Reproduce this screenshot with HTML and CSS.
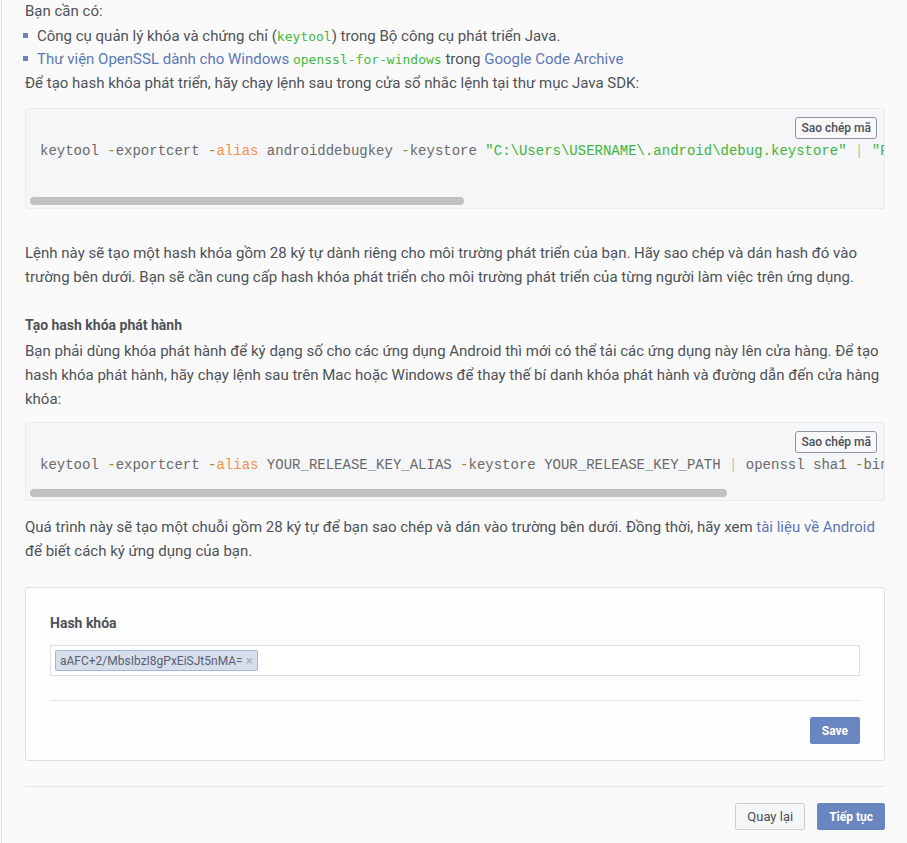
FILE: index.html
```html
<!DOCTYPE html>
<html lang="vi">
<head>
<meta charset="utf-8">
<title>Hash khóa</title>
<link rel="stylesheet" href="styles.css">
</head>
<body>
<div class="page">
  <p class="intro">Bạn cần có:</p>
  <ul class="reqs">
    <li>Công cụ quản lý khóa và chứng chỉ (<code class="inline">keytool</code>) trong Bộ công cụ phát triển Java.</li>
    <li><a href="#">Thư viện OpenSSL dành cho Windows</a> <code class="inline">openssl-for-windows</code> trong <a href="#">Google Code Archive</a></li>
  </ul>
  <p class="lead">Để tạo hash khóa phát triển, hãy chạy lệnh sau trong cửa sổ nhắc lệnh tại thư mục Java SDK:</p>

  <div class="codebox first">
    <pre class="code"><span class="t">keytool</span> <span class="op">-</span>exportcert <span class="op">-</span><span class="kw">alias</span> androiddebugkey <span class="op">-</span>keystore <span class="str">"C:\Users\USERNAME\.android\debug.keystore"</span> <span class="pipe">|</span> <span class="str">"PATH_TO_OPENSSL_LIBRARY\bin\openssl"</span> sha1 <span class="op">-</span>binary <span class="pipe">|</span> <span class="str">"PATH_TO_OPENSSL_LIBRARY\bin\openssl"</span> base64</pre>
    <div class="hscroll"><div class="thumb" style="width: 51%"></div></div>
    <button class="copy">Sao chép mã</button>
  </div>

  <p class="para gap-lg">Lệnh này sẽ tạo một hash khóa gồm 28 ký tự dành riêng cho môi trường phát triển của bạn. Hãy sao chép và dán hash đó vào trường bên dưới. Bạn sẽ cần cung cấp hash khóa phát triển cho môi trường phát triển của từng người làm việc trên ứng dụng.</p>

  <h4 class="subhead">Tạo hash khóa phát hành</h4>
  <p class="para">Bạn phải dùng khóa phát hành để ký dạng số cho các ứng dụng Android thì mới có thể tải các ứng dụng này lên cửa hàng. Để tạo hash khóa phát hành, hãy chạy lệnh sau trên Mac hoặc Windows để thay thế bí danh khóa phát hành và đường dẫn đến cửa hàng khóa:</p>

  <div class="codebox second">
    <pre class="code"><span class="t">keytool</span> <span class="op">-</span>exportcert <span class="op">-</span><span class="kw">alias</span> YOUR_RELEASE_KEY_ALIAS <span class="op">-</span>keystore YOUR_RELEASE_KEY_PATH <span class="pipe">|</span> openssl sha1 <span class="op">-</span>binary <span class="pipe">|</span> openssl base64</pre>
    <div class="hscroll"><div class="thumb" style="width: 82%"></div></div>
    <button class="copy">Sao chép mã</button>
  </div>

  <p class="para gap-sm">Quá trình này sẽ tạo một chuỗi gồm 28 ký tự để bạn sao chép và dán vào trường bên dưới. Đồng thời, hãy xem <a href="#">tài liệu về Android</a> để biết cách ký ứng dụng của bạn.</p>

  <div class="card">
    <div class="label">Hash khóa</div>
    <div class="tokens">
      <span class="token">aAFC+2/MbsIbzI8gPxEiSJt5nMA= <span class="x">×</span></span>
    </div>
    <div class="card-foot">
      <button class="btn primary">Save</button>
    </div>
  </div>

  <div class="footer">
    <button class="btn secondary">Quay lại</button>
    <button class="btn primary">Tiếp tục</button>
  </div>
</div>
</body>
</html>
```
FILE: styles.css
```css
html, body {
  margin: 0;
  padding: 0;
  background: #fafafa;
}
body {
  font-family: Roboto, "Noto Sans", Arial, sans-serif;
  font-size: 15px;
  color: #4e5259;
}
.page {
  margin-left: 1px;
  border-left: 1px solid #e3e3e3;
  padding: 0 22px 12px 23px;
  min-height: 831px;
}
p { margin: 0; }
a { color: #5b77b5; text-decoration: none; }

.intro { line-height: 23px; }
.reqs {
  list-style: none;
  margin: 2px 0 0;
  padding: 0 0 0 12px;
  line-height: 23px;
}
.reqs li::before {
  content: "";
  display: inline-block;
  width: 5px;
  height: 5px;
  background: #6d84b4;
  margin-left: -14px;
  margin-right: 9px;
  vertical-align: 3px;
}
code.inline {
  font-family: "DejaVu Sans Mono", monospace;
  font-size: 13px;
  color: #42b83f;
}
.lead { line-height: 24px; }

.codebox {
  position: relative;
  background: #f5f6f7;
  border: 1px solid #e9ebee;
  border-radius: 3px;
  padding-bottom: 3px;
}
.codebox.first { margin-top: 13px; }
.codebox.second { margin-top: 11px; }
.code {
  margin: 0;
  padding: 31px 14px 13px;
  font-family: "Liberation Mono", "Courier New", monospace;
  font-size: 14px;
  line-height: 22px;
  color: #6a6a6a;
  white-space: pre;
  overflow: hidden;
}
.codebox.first .code { padding-bottom: 35px; }
.hscroll {
  margin: 0 4px;
  height: 8px;
}
.hscroll .thumb {
  height: 8px;
  border-radius: 4px;
  background: #c1c1c1;
}
.code .op { color: #9a8a2a; }
.code .kw { color: #f0934a; }
.code .str { color: #3fb43f; }
.code .pipe { color: #c9c0a0; }

.copy {
  position: absolute;
  top: 8px;
  right: 7px;
  height: 22px;
  padding: 0 5px;
  border: 1px solid #8d949e;
  border-radius: 3px;
  background: #f8f8f8;
  font-family: Roboto, Arial, sans-serif;
  font-size: 12px;
  font-weight: 500;
  color: #4b4f56;
}

.para { line-height: 24px; }
.gap-lg { margin-top: 32px; }
.gap-sm { margin-top: 14px; }
.subhead {
  margin: 24px 0 2px;
  font-size: 14px;
  font-weight: bold;
  line-height: 24px;
}

.card {
  margin-top: 24px;
  background: #fdfdfd;
  border: 1px solid #dddfe2;
  border-radius: 3px;
  padding: 23px 24px 16px;
}
.label {
  font-size: 14px;
  font-weight: bold;
  line-height: 24px;
  margin-bottom: 10px;
}
.tokens {
  border: 1px solid #dddfe2;
  background: #fff;
  padding: 3px 4px;
  height: 23px;
  display: flex;
  align-items: center;
}
.token {
  display: inline-flex;
  align-items: center;
  height: 19px;
  padding: 0 4px;
  background: #d6deeb;
  border: 1px solid #a4b6d6;
  border-radius: 2px;
  font-size: 12px;
  color: #5a6070;
}
.token .x {
  margin-left: 3px;
  color: #a5adba;
  font-size: 13px;
}
.card-foot {
  margin-top: 24px;
  border-top: 1px solid #e5e6e9;
  padding-top: 16px;
  display: flex;
  justify-content: flex-end;
}

.btn {
  height: 27px;
  border-radius: 2px;
  font-family: Roboto, Arial, sans-serif;
  font-size: 12px;
  font-weight: bold;
  padding: 0 11px;
  cursor: pointer;
}
.btn.primary {
  background: #6a86c0;
  border: 1px solid #6a86c0;
  color: #fff;
}
.btn.secondary {
  background: #f5f6f7;
  border: 1px solid #ced0d4;
  color: #4b4f56;
  font-size: 13px;
  font-weight: normal;
}
.footer {
  margin-top: 25px;
  border-top: 1px solid #e5e6e9;
  padding-top: 16px;
  display: flex;
  justify-content: flex-end;
  gap: 12px;
}
```
